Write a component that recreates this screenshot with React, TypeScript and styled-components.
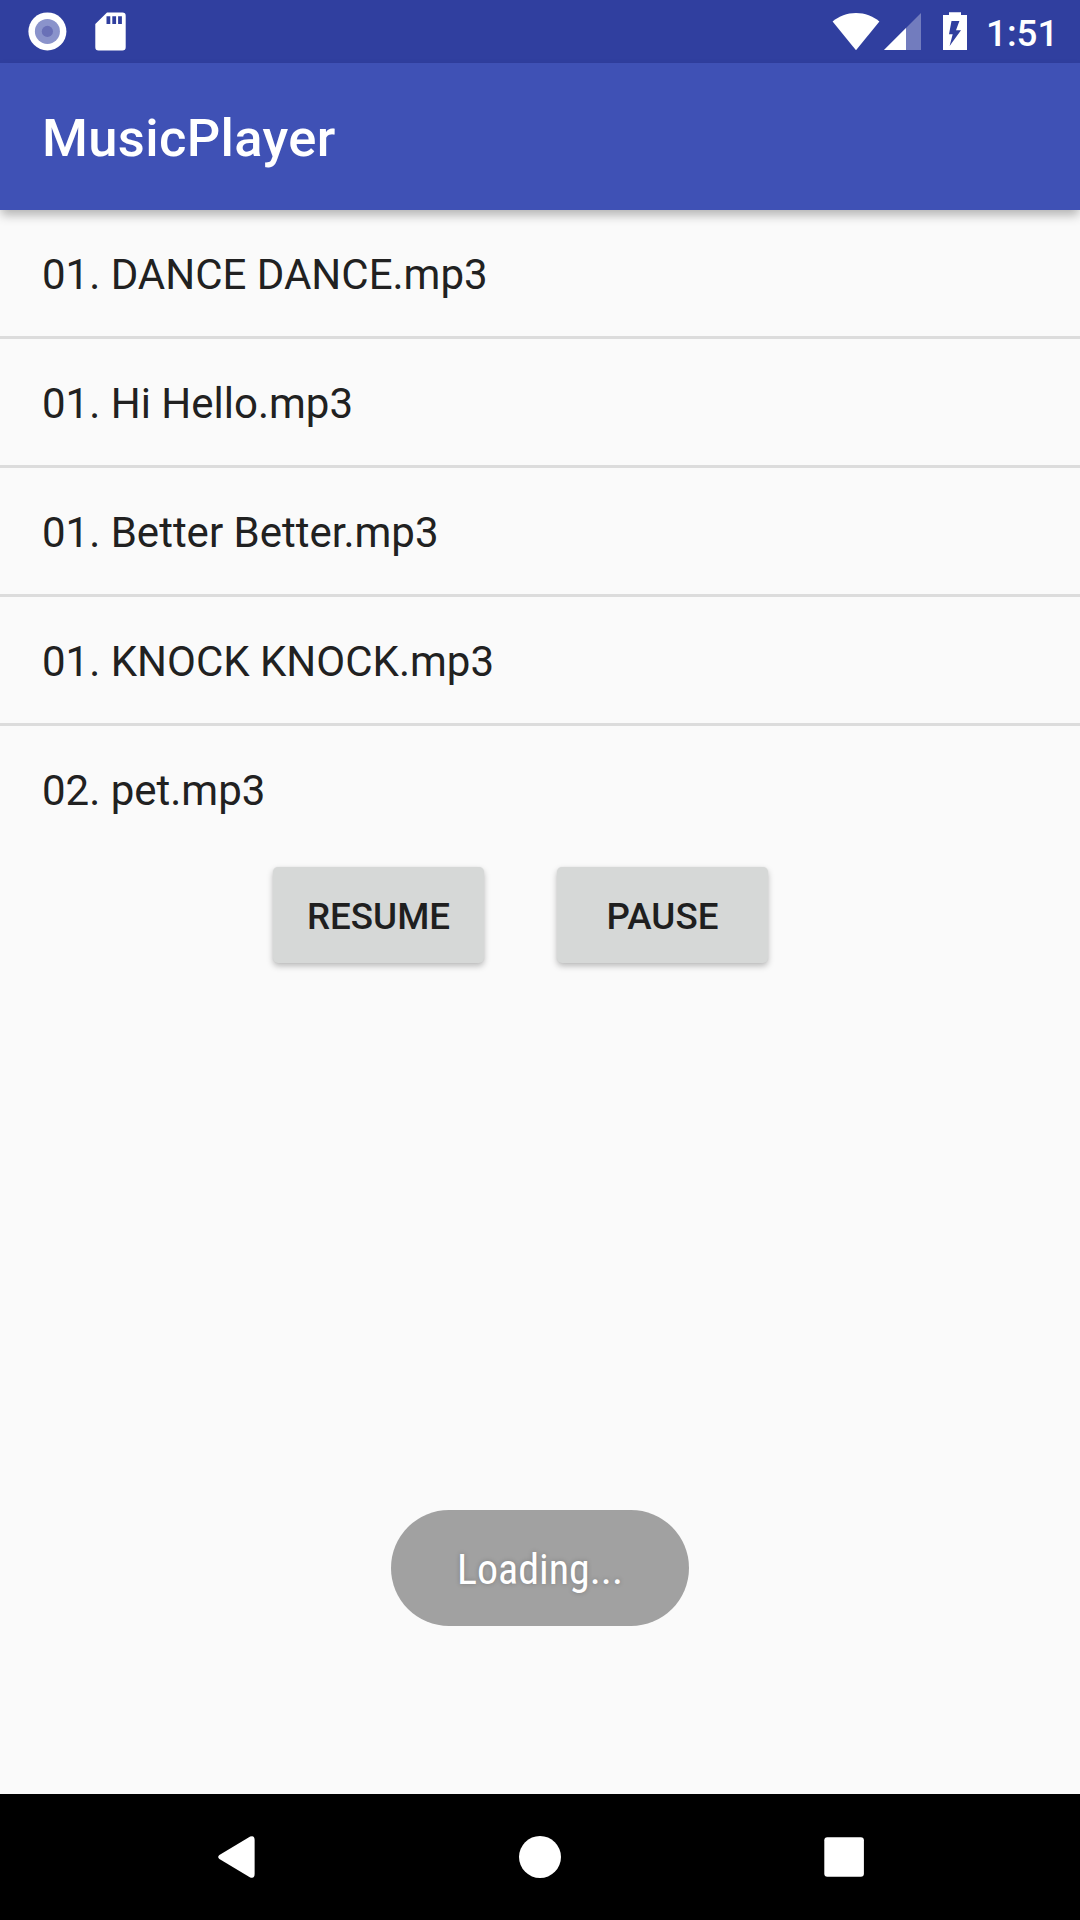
import React from "react";
import styled, { createGlobalStyle } from "styled-components";

const GlobalStyle = createGlobalStyle`
  * { box-sizing: border-box; }
  html, body { margin: 0; padding: 0; }
  body { font-family: Roboto, "Noto Sans", sans-serif; background: #fafafa; }
`;

const Screen = styled.div`
  position: relative;
  display: flex;
  flex-direction: column;
  width: 1080px;
  height: 1920px;
  overflow: hidden;
  background: #fafafa;
  color: #212121;
`;

const StatusBar = styled.header`
  display: flex;
  justify-content: space-between;
  flex: none;
  height: 63px;
  padding: 0 25px 0 28px;
  background: #303f9f;
`;

const IconGroup = styled.div<{ $gap: number }>`
  display: flex;
  gap: ${(p) => p.$gap}px;
`;

const Glyph = styled.svg`
  display: block;
  flex: none;
  fill: #fff;
`;

const BatteryGlyph = styled(Glyph)`
  margin-left: 18px;
`;

const Clock = styled.span`
  width: 69px;
  margin-left: 15px;
  color: #fff;
  font-size: 36.75px;
  font-weight: 500;
  line-height: 67px;
  white-space: nowrap;
`;

const AppBar = styled.div`
  display: flex;
  align-items: center;
  flex: none;
  height: 147px;
  padding: 3px 42px 0;
  background: #3f51b5;
  box-shadow: 0 6px 10px -1px rgba(0, 0, 0, 0.29);
  z-index: 1;
`;

const Title = styled.h1`
  margin: 0;
  color: #fff;
  font-size: 52.5px;
  font-weight: 500;
  letter-spacing: 0.36px;
  line-height: 62px;
`;

const TrackList = styled.ul`
  flex: none;
  margin: 0;
  padding: 0;
  list-style: none;
`;

const Track = styled.li`
  display: flex;
  align-items: center;
  height: 129px;
  padding: 4px 42px 0;
  border-bottom: 3px solid #dcdcdc;
  font-size: 42px;
  line-height: 50px;

  &:last-child {
    height: 126px;
    border-bottom: 0;
  }
`;

const Controls = styled.div`
  display: flex;
  gap: 73px;
  padding: 15px 0 0 273px;
`;

const ControlButton = styled.button`
  width: 211px;
  height: 96px;
  padding: 3px 0 0;
  border: 0;
  border-radius: 5px;
  background: #d6d8d7;
  color: #1f1f1f;
  font-family: inherit;
  font-size: 36.75px;
  font-weight: 500;
  line-height: 44px;
  box-shadow: 0 3px 6px rgba(0, 0, 0, 0.26), 0 0 2px rgba(0, 0, 0, 0.06);
`;

const Toast = styled.div`
  position: absolute;
  top: 1510px;
  left: 391px;
  display: flex;
  align-items: center;
  justify-content: center;
  width: 298px;
  height: 116px;
  padding-top: 3px;
  border-radius: 58px;
  background: #a1a1a1;
`;

const ToastText = styled.span`
  color: #fff;
  font-size: 42px;
  font-stretch: condensed;
  line-height: 50px;
  text-shadow: 0 0 5px rgba(0, 0, 0, 0.22);
  white-space: nowrap;
`;

const NavBar = styled.nav`
  display: flex;
  align-items: center;
  justify-content: center;
  gap: 262px;
  flex: none;
  height: 126px;
  margin-top: auto;
  background: #000;
`;

const tracks = [
  "01. DANCE DANCE.mp3",
  "01. Hi Hello.mp3",
  "01. Better Better.mp3",
  "01. KNOCK KNOCK.mp3",
  "02. pet.mp3",
];

export default function App() {
  return (
    <>
      <GlobalStyle />
      <Screen>
        <StatusBar>
          <IconGroup $gap={28}>
            <Glyph width="39" height="63" viewBox="28 0 39 63">
              <circle cx="47.4" cy="31.4" r="19" />
              <circle cx="47.4" cy="31.4" r="12.5" fill="#8a93cb" />
              <circle cx="47.4" cy="31.4" r="5.6" fill="#6970b7" />
            </Glyph>
            <Glyph width="31" height="63" viewBox="95 0 31 63">
              <path
                fillRule="evenodd"
                d="M107 12.4H122.4Q125.7 12.4 125.7 15.7V47.3Q125.7 50.6 122.4 50.6H98.6Q95.3 50.6 95.3 47.3V24ZM106.5 16.3V24H110.3V16.3ZM112.3 16.3V24H116.1V16.3ZM118.1 16.3V24H121.9V16.3Z"
              />
            </Glyph>
          </IconGroup>
          <IconGroup $gap={4}>
            <Glyph width="48" height="63" viewBox="832 0 48 63">
              <path d="M856 50.3L832.6 21.6C839 16 847 13 856 13C865 13 873 16 879.4 21.6Z" />
            </Glyph>
            <Glyph width="37" height="63" viewBox="884 0 37 63">
              <path d="M884 50H921V13Z" fillOpacity="0.32" />
              <path d="M884 50H906V28Z" />
            </Glyph>
            <BatteryGlyph width="24" height="63" viewBox="943 0 24 63">
              <path
                fillRule="evenodd"
                d="M949 12.3H961V15H967V50H943V15H949ZM951.5 21L949 34.3H952.7L949.6 46L961 30.3H956L959.4 21Z"
              />
            </BatteryGlyph>
            <Clock>1:51</Clock>
          </IconGroup>
        </StatusBar>
        <AppBar>
          <Title>MusicPlayer</Title>
        </AppBar>
        <TrackList>
          {tracks.map((name) => (
            <Track key={name}>{name}</Track>
          ))}
        </TrackList>
        <Controls>
          <ControlButton>RESUME</ControlButton>
          <ControlButton>PAUSE</ControlButton>
        </Controls>
        <Toast>
          <ToastText>Loading...</ToastText>
        </Toast>
        <NavBar>
          <Glyph width="42" height="42" viewBox="-3 0 42 42">
            <path d="M1.4 18.9L32.2 0.6Q36.6 -1 36.6 4V38Q36.6 43 32.2 41.4L1.4 23.1Q-1 21 1.4 18.9Z" />
          </Glyph>
          <Glyph width="42" height="42" viewBox="0 0 42 42">
            <circle cx="21" cy="21" r="21" />
          </Glyph>
          <Glyph width="42" height="42" viewBox="0 0 42 42">
            <rect x="1.3" y="1.2" width="39.6" height="39.6" rx="3" />
          </Glyph>
        </NavBar>
      </Screen>
    </>
  );
}
